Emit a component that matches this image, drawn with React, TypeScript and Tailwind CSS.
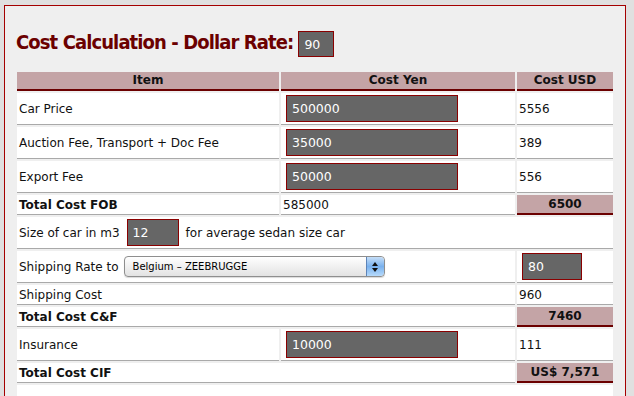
import React from 'react';

const font = { fontFamily: '"DejaVu Sans", Verdana, sans-serif' };

const inputCls =
  'bg-[#666666] border border-[#8a0000] text-white text-[12.5px] px-[5px] outline-none';

function Field({ value, width, h = 'h-[27px]' }: { value: string; width: string; h?: string }) {
  return <input readOnly value={value} className={`${inputCls} ${width} ${h}`} style={font} />;
}

// mac style popup select
function Select() {
  return (
    <div className="flex h-[21px] w-[261px] items-stretch rounded-[4px] border border-[#8e8e8e] bg-gradient-to-b from-white to-[#e2e2e2] shadow-[0_1px_1px_rgba(0,0,0,0.15)]">
      <div className="flex flex-1 items-center pl-[8px] text-[10px] text-black">Belgium – ZEEBRUGGE</div>
      <div className="flex w-[18px] flex-col items-center justify-center gap-[2px] rounded-r-[4px] border-l border-[#5d84b8] bg-gradient-to-b from-[#c5def7] via-[#79b1ee] to-[#b6dafb]">
        <svg width="6" height="4" viewBox="0 0 6 4"><path d="M3 0L6 4H0z" fill="#111" /></svg>
        <svg width="6" height="4" viewBox="0 0 6 4"><path d="M0 0h6L3 4z" fill="#111" /></svg>
      </div>
    </div>
  );
}

const td = 'bg-white border-b border-[#a9a9a9] pl-[2px] pr-[3px] text-[12px] leading-[18px] text-[#111]';
const tdIn = `${td} h-[32px]`;
const tdTxt = `${td} h-[20px]`;
const bold = 'font-bold';
const total =
  'bg-[#c4a4a6] border-b-2 border-[#6b0000] text-center font-bold text-[12px] leading-[18px] text-[#111] h-[20px] p-0';

export default function App() {
  return (
    <div className="min-h-[396px] bg-[#e0e0e0] pt-[5px] pl-[4px]" style={font}>
      <div className="w-[622px] min-h-[400px] border border-[#a40000] bg-[#efefef] px-[10px] pt-[25px]">
        <div className="flex items-center gap-[5px] pl-[1px]">
          <h1
            className="mb-[5px] text-[20px] font-bold text-[#6b0000] leading-none tracking-[-0.9px]"
            style={{ fontFamily: '"DejaVu Sans Condensed", "DejaVu Sans", sans-serif' }}
          >
            Cost Calculation - Dollar Rate:
          </h1>
          <Field value="90" width="w-[36px]" h="h-[26px]" />
        </div>

        <table className="mt-[13px] w-[600px] table-fixed border-separate border-spacing-[2px]">
          <colgroup>
            <col className="w-[262px]" />
            <col className="w-[234px]" />
            <col className="w-[96px]" />
          </colgroup>
          <thead>
            <tr>
              {['Item', 'Cost Yen', 'Cost USD'].map((h) => (
                <th
                  key={h}
                  className="h-[19px] bg-[#c4a4a6] border-b-2 border-[#6b0000] p-0 text-center text-[12px] leading-[17px] font-bold text-[#111]"
                >
                  {h}
                </th>
              ))}
            </tr>
          </thead>
          <tbody>
            {[
              ['Car Price', '500000', '5556'],
              ['Auction Fee, Transport + Doc Fee', '35000', '389'],
              ['Export Fee', '50000', '556'],
            ].map(([label, yen, usd]) => (
              <tr key={label}>
                <td className={tdIn}>{label}</td>
                <td className={`${tdIn} pl-[5px]`}>
                  <Field value={yen} width="w-[172px]" />
                </td>
                <td className={tdIn}>{usd}</td>
              </tr>
            ))}
            <tr>
              <td className={`${tdTxt} ${bold}`}>Total Cost FOB</td>
              <td className={tdTxt}>585000</td>
              <td className={total}>6500</td>
            </tr>
            <tr>
              <td colSpan={3} className={tdIn}>
                <div className="flex items-center">
                  <span>Size of car in m3</span>
                  <span className="ml-[7px]">
                    <Field value="12" width="w-[52px]" />
                  </span>
                  <span className="ml-[7px]">for average sedan size car</span>
                </div>
              </td>
            </tr>
            <tr>
              <td colSpan={2} className={tdIn}>
                <div className="flex items-center">
                  <span>Shipping Rate to</span>
                  <span className="ml-[5px]">
                    <Select />
                  </span>
                </div>
              </td>
              <td className={`${tdIn} pl-[5px]`}>
                <Field value="80" width="w-[60px]" />
              </td>
            </tr>
            <tr>
              <td colSpan={2} className={tdTxt}>Shipping Cost</td>
              <td className={tdTxt}>960</td>
            </tr>
            <tr>
              <td colSpan={2} className={`${tdTxt} ${bold}`}>Total Cost C&amp;F</td>
              <td className={total}>7460</td>
            </tr>
            <tr>
              <td className={tdIn}>Insurance</td>
              <td className={`${tdIn} pl-[5px]`}>
                <Field value="10000" width="w-[172px]" />
              </td>
              <td className={tdIn}>111</td>
            </tr>
            <tr>
              <td colSpan={2} className={`${tdTxt} ${bold}`}>Total Cost CIF</td>
              <td className={total}>US$ 7,571</td>
            </tr>
            <tr>
              <td colSpan={3} className="h-[30px] bg-white" />
            </tr>
          </tbody>
        </table>
      </div>
    </div>
  );
}
